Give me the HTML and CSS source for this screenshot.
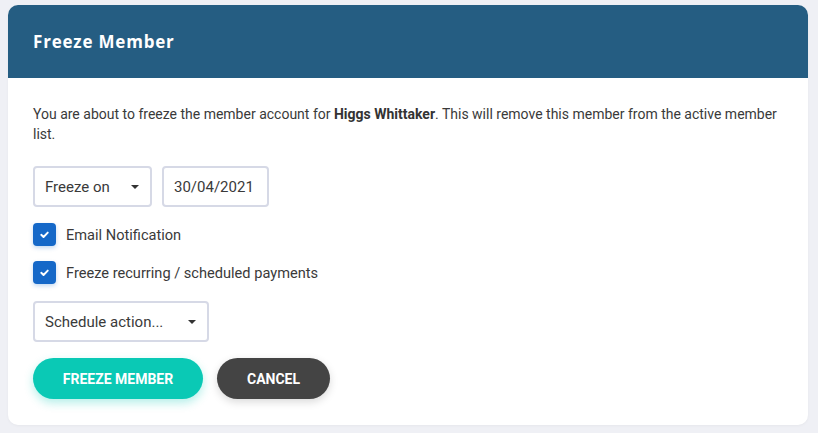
FILE: index.html
```html
<!DOCTYPE html>
<html>
<head>
<meta charset="utf-8">
<link rel="stylesheet" href="styles.css">
</head>
<body>
<div class="card">
  <div class="card-header">
    <h1 class="title">Freeze Member</h1>
  </div>
  <div class="card-body">
    <p class="intro">You are about to freeze the member account for <strong>Higgs Whittaker</strong>. This will remove this member from the active member list.</p>
    <div class="row">
      <div class="select select-freeze"><span>Freeze on</span><span class="caret"></span></div>
      <div class="input-date">30/04/2021</div>
    </div>
    <label class="check">
      <span class="box"><svg viewBox="0 0 12 12" width="13" height="13"><path d="M3 6.3 L5.1 8.3 L9 4.3" fill="none" stroke="#fff" stroke-width="1.8" stroke-linecap="round" stroke-linejoin="round"/></svg></span>
      <span class="check-label">Email Notification</span>
    </label>
    <label class="check">
      <span class="box"><svg viewBox="0 0 12 12" width="13" height="13"><path d="M3 6.3 L5.1 8.3 L9 4.3" fill="none" stroke="#fff" stroke-width="1.8" stroke-linecap="round" stroke-linejoin="round"/></svg></span>
      <span class="check-label">Freeze recurring / scheduled payments</span>
    </label>
    <div class="row">
      <div class="select select-schedule"><span>Schedule action...</span><span class="caret"></span></div>
    </div>
    <div class="actions">
      <button class="btn btn-primary">FREEZE MEMBER</button>
      <button class="btn btn-dark">CANCEL</button>
    </div>
  </div>
</div>
</body>
</html>
```
FILE: styles.css
```css
html, body {
  margin: 0;
  padding: 0;
  background: #eff0f5;
  font-family: Roboto, "Liberation Sans", sans-serif;
  color: #3a3a3a;
}
.card {
  margin: 5px 10px 8px 8px;
  background: #fff;
  border-radius: 10px;
  overflow: hidden;
  box-shadow: 0 1px 3px rgba(0,0,0,0.04);
}
.card-header {
  background: #255d82;
  height: 73px;
  display: flex;
  align-items: center;
  padding-left: 25px;
}
.title {
  margin: 0;
  color: #fff;
  font-family: "Open Sans", Roboto, sans-serif;
  font-weight: 700;
  font-size: 17px;
  letter-spacing: 0.8px;
}
.card-body {
  padding: 26px 25px 26px 25px;
}
.intro {
  margin: 0 0 22px 0;
  font-size: 14px;
  line-height: 20px;
  color: #3a3a3a;
}
.intro strong {
  font-weight: 700;
  color: #333;
}
.row {
  display: flex;
  gap: 10px;
}
.select, .input-date {
  box-sizing: border-box;
  height: 41px;
  border: 2px solid #d6d9e6;
  border-radius: 4px;
  display: flex;
  align-items: center;
  font-size: 15px;
  color: #3a3a3a;
  padding: 0 10px;
}
.select {
  justify-content: space-between;
}
.select-freeze { width: 119px; }
.input-date { width: 107px; }
.select-schedule { width: 176px; }
.caret {
  width: 0;
  height: 0;
  border-left: 4px solid transparent;
  border-right: 4px solid transparent;
  border-top: 4px solid #333;
  margin-right: 1px;
}
.check {
  display: flex;
  align-items: center;
  gap: 10px;
  margin-top: 15px;
  font-size: 14.6px;
  height: 23px;
}
.check:first-of-type { margin-top: 16px; }
.check + .row { margin-top: 17px; }
.box {
  width: 23px;
  height: 23px;
  border-radius: 4px;
  background: #1568c8;
  display: flex;
  align-items: center;
  justify-content: center;
  box-shadow: 0 2px 4px rgba(21,104,200,0.25);
}
.check-label { color: #3a3a3a; }
.actions {
  display: flex;
  gap: 14px;
  margin-top: 16px;
}
.btn {
  height: 41px;
  border: none;
  border-radius: 21px;
  font-family: Roboto, "Liberation Sans", sans-serif;
  font-weight: 700;
  font-size: 14px;
  color: #fff;
  padding: 0;
  cursor: pointer;
}
.btn-primary {
  width: 170px;
  background: #0ac9b5;
  box-shadow: 0 4px 10px rgba(10,201,181,0.3);
}
.btn-dark {
  width: 113px;
  background: #444;
  box-shadow: 0 3px 8px rgba(0,0,0,0.15);
}
```
